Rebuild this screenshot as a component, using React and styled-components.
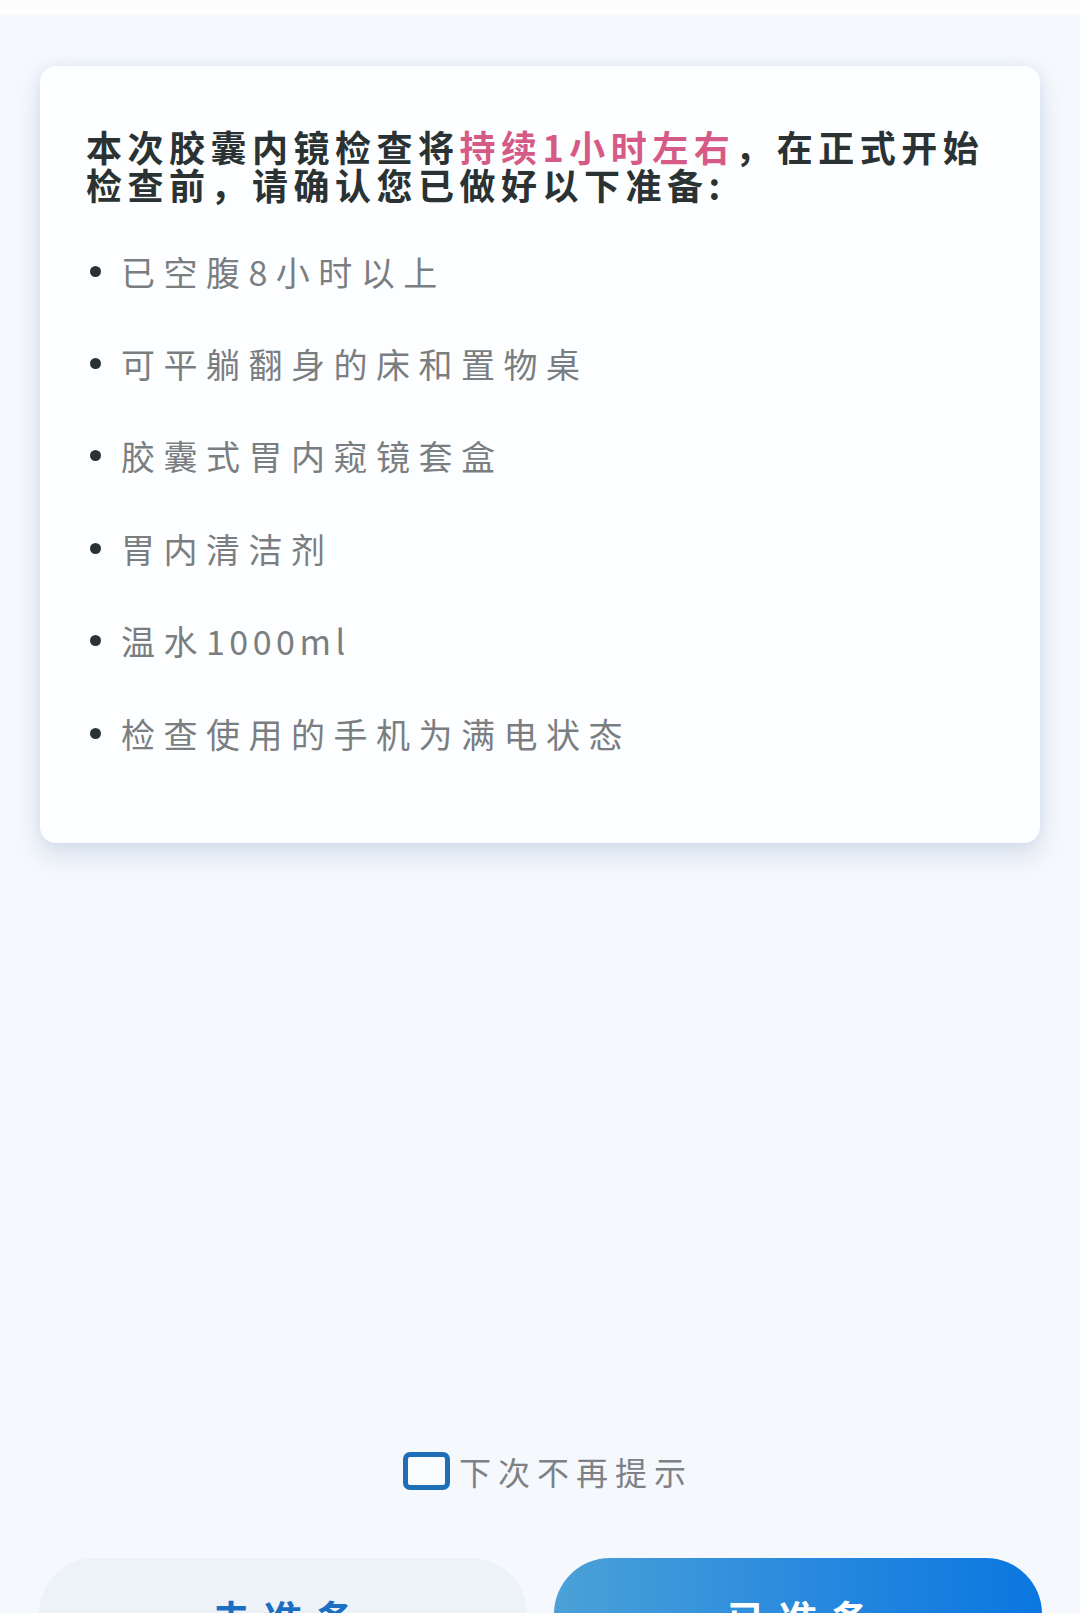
import React from "react";
import styled, { createGlobalStyle } from "styled-components";

const GlobalStyle = createGlobalStyle`
  html, body {
    margin: 0;
    padding: 0;
    background: #f5f8fc;
  }
  body {
    font-family: "Noto Sans CJK SC", "Noto Sans", sans-serif;
    overflow: hidden;
  }
`;

const Page = styled.div`
  width: 1080px;
  height: 100vh;
  overflow: hidden;
  background: #f5f8fc;
`;

const TopBar = styled.div`
  height: 15px;
  background: #fdfdfe;
`;

const Card = styled.section`
  margin: 51px 40px 0;
  padding: 61px 46px 64px;
  background: #fdfeff;
  border-radius: 16px;
  box-shadow: 0 12px 24px rgba(150, 172, 205, 0.32),
    0 0 12px rgba(190, 205, 225, 0.28);
`;

const Title = styled.h2`
  margin: 0;
  font-size: 36px;
  line-height: 38px;
  font-weight: 700;
  letter-spacing: 5.5px;
  color: #2a3234;
  white-space: nowrap;
`;

const Highlight = styled.span`
  color: #d65a86;
`;

const List = styled.ul`
  list-style: none;
  margin: 22px 0 0;
  padding: 0;
`;

const Item = styled.li`
  display: flex;
  align-items: center;
  height: 92.4px;
  font-size: 34px;
  letter-spacing: 8.5px;
  color: #7a7e81;
  white-space: nowrap;

  &::before {
    content: "";
    flex: none;
    width: 11px;
    height: 11px;
    margin: 0 20px 0 4px;
    border-radius: 50%;
    background: #2a3234;
  }
`;

const Latin = styled.span`
  letter-spacing: 4.5px;
`;

const Footer = styled.footer`
  margin-top: 609px;
`;

const Remember = styled.label`
  display: flex;
  justify-content: center;
  align-items: center;
  gap: 9px;
  height: 38px;
  padding-left: 16px;
`;

const Box = styled.span`
  box-sizing: border-box;
  width: 47px;
  height: 38px;
  border: 5px solid #1e6fb8;
  border-radius: 7px;
  background: #f9fbfe;
`;

const RememberText = styled.span`
  font-size: 32px;
  letter-spacing: 7px;
  color: #7d8185;
`;

const Buttons = styled.div`
  display: grid;
  grid-template-columns: 1fr 1fr;
  gap: 27px;
  margin-top: 68px;
  padding: 0 38px 0 39px;
`;

const Button = styled.button`
  height: 116px;
  border: none;
  border-radius: 56px;
  padding: 0 0 0 14px;
  font-family: inherit;
  font-size: 38px;
  font-weight: 700;
  letter-spacing: 14px;
  color: ${(p) => (p.$primary ? "#ffffff" : "#1b6fc2")};
  background: ${(p) =>
    p.$primary
      ? "linear-gradient(90deg, #4ba1d7 0%, #2a8ade 50%, #0a77e0 100%)"
      : "#edf2f9"};
`;

const items = [
  "已空腹8小时以上",
  "可平躺翻身的床和置物桌",
  "胶囊式胃内窥镜套盒",
  "胃内清洁剂",
  <>
    温水<Latin>1000ml</Latin>
  </>,
  "检查使用的手机为满电状态",
];

export default function App() {
  return (
    <Page>
      <GlobalStyle />
      <TopBar />
      <Card>
        <Title>
          本次胶囊内镜检查将<Highlight>持续1小时左右</Highlight>，在正式开始
          <br />
          检查前，请确认您已做好以下准备:
        </Title>
        <List>
          {items.map((text, i) => (
            <Item key={i}>{text}</Item>
          ))}
        </List>
      </Card>
      <Footer>
        <Remember>
          <Box />
          <RememberText>下次不再提示</RememberText>
        </Remember>
        <Buttons>
          <Button type="button">去准备</Button>
          <Button type="button" $primary>
            已准备
          </Button>
        </Buttons>
      </Footer>
    </Page>
  );
}
